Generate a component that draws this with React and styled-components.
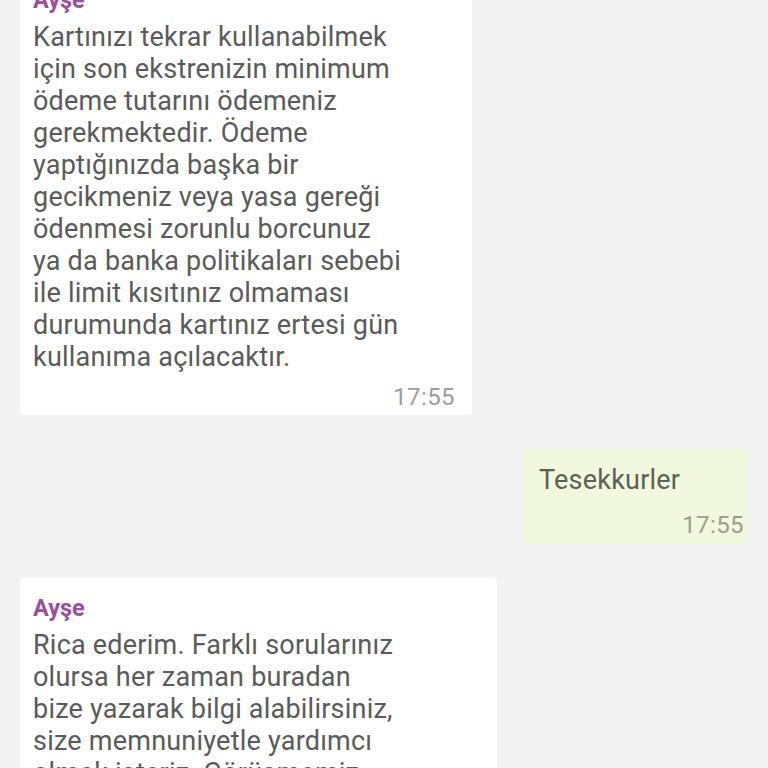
import React from 'react';
import styled, { createGlobalStyle } from 'styled-components';

const GlobalStyle = createGlobalStyle`
    html, body {
        margin: 0;
        padding: 0;
        background: #f3f3f3;
    }
    * {
        box-sizing: border-box;
    }
`

const messages = [
    {
        id: 1,
        author: 'Ayşe',
        width: 452,
        lines: [
            'Kartınızı tekrar kullanabilmek',
            'için son ekstrenizin minimum',
            'ödeme tutarını ödemeniz',
            'gerekmektedir. Ödeme',
            'yaptığınızda başka bir',
            'gecikmeniz veya yasa gereği',
            'ödenmesi zorunlu borcunuz',
            'ya da banka politikaları sebebi',
            'ile limit kısıtınız olmaması',
            'durumunda kartınız ertesi gün',
            'kullanıma açılacaktır.',
        ],
        time: '17:55',
    },
    {
        id: 2,
        mine: true,
        width: 224,
        lines: ['Tesekkurler'],
        time: '17:55',
    },
    {
        id: 3,
        author: 'Ayşe',
        width: 477,
        lines: [
            'Rica ederim. Farklı sorularınız',
            'olursa her zaman buradan',
            'bize yazarak bilgi alabilirsiniz,',
            'size memnuniyetle yardımcı',
            'olmak isteriz. Görüşmemiz',
            'sona ermiştir. İyi günler dileriz.',
        ],
        time: '17:55',
    },
]

export default function App() {
    return (
        <Screen>
            <GlobalStyle />
            <Thread>
                {messages.map((m) => (
                    <Bubble key={m.id} $mine={m.mine} $width={m.width}>
                        {m.author && <Author>{m.author}</Author>}
                        <Body $mine={m.mine}>
                            {m.lines.map((l, i) => (
                                <Line key={i}>{l}</Line>
                            ))}
                        </Body>
                        <Time $mine={m.mine}>{m.time}</Time>
                    </Bubble>
                ))}
            </Thread>
        </Screen>
    )
}

const Screen = styled.div`
    width: 768px;
    height: 768px;
    overflow: hidden;
    background: #f3f3f3;
    font-family: Roboto, "Noto Sans", sans-serif;
`

const Thread = styled.div`
    display: flex;
    flex-direction: column;
    gap: 32px;
    margin-top: -30px;
    padding: 0 21px 0 20px;
`

const Bubble = styled.div`
    width: ${(p) => p.$width}px;
    align-self: ${(p) => (p.$mine ? 'flex-end' : 'flex-start')};
    background: ${(p) => (p.$mine ? '#f1f8de' : '#ffffff')};
    border-radius: 4px;
    padding: ${(p) => (p.$mine ? '15px 3px 5px 16px' : '16px 17px 4px 13px')};
    display: flex;
    flex-direction: column;
    & + & {
        margin-top: ${(p) => (p.$mine ? '0' : '2px')};
    }
`

const Author = styled.div`
    font-size: 23.5px;
    line-height: 28px;
    font-weight: 700;
    color: #9c4d9e;
    margin-bottom: 7px;
`

const Body = styled.div`
    font-size: 27px;
    line-height: 32px;
    letter-spacing: 0.22px;
    color: ${(p) => (p.$mine ? '#5b6154' : '#5a5a5a')};
`

const Line = styled.div`
    white-space: nowrap;
`

const Time = styled.div`
    align-self: flex-end;
    font-size: 24px;
    line-height: 28px;
    letter-spacing: 0.4px;
    margin-top: ${(p) => (p.$mine ? '15px' : '10px')};
    color: ${(p) => (p.$mine ? '#9a9f93' : '#9e9e9e')};
`
